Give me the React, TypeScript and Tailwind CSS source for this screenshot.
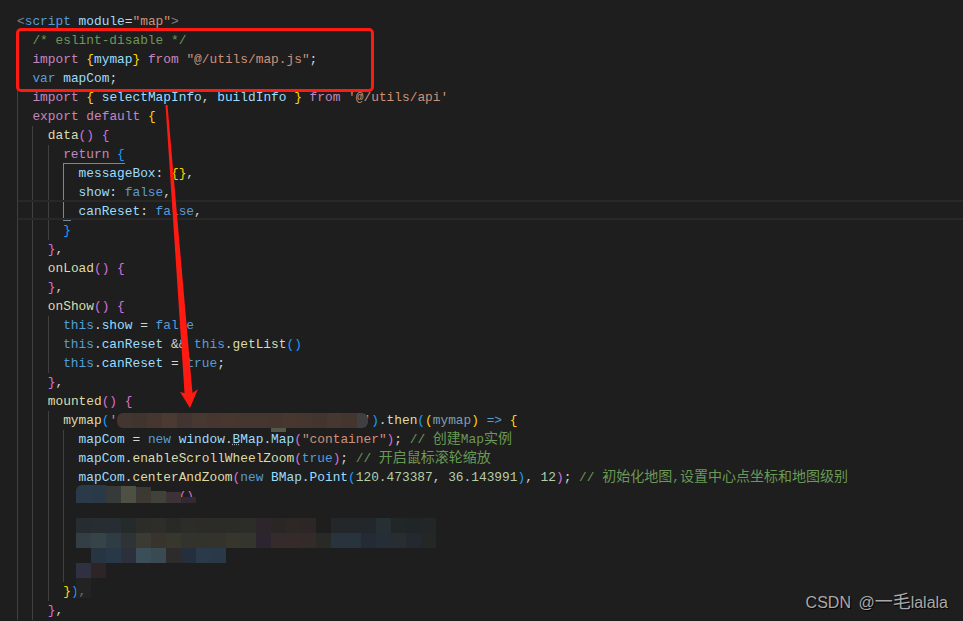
const kw = 'text-[#c586c0]';
const blue = 'text-[#569cd6]';
const vr = 'text-[#9cdcfe]';
const fn = 'text-[#dcdcaa]';
const str = 'text-[#ce9178]';
const com = 'text-[#6a9955]';
const num = 'text-[#b5cea8]';
const gold = 'text-[#ffd700]';
const pink = 'text-[#da70d6]';
const sky = 'text-[#179fff]';
const gray = 'text-[#808080]';
const dim = 'text-[#7f9fb5]';

function Cjk({ children }: { children: string }) {
  return <span className={`font-['Noto_Sans_CJK_SC',sans-serif] text-[14px] leading-[0] ${com}`}>{children}</span>;
}

function T({ c, children }: { c?: string; children: React.ReactNode }) {
  return <span className={c}>{children}</span>;
}

function Line({ indent = 0, guides = indent, active = false, children }: { indent?: number; guides?: number; active?: boolean; children?: React.ReactNode }) {
  return (
    <div className="flex h-[19px] whitespace-pre leading-[19px]">
      {Array.from({ length: indent }).map((_, i) => (
        <span
          key={i}
          className={`h-[19px] w-[15.4px] shrink-0 border-l ${i >= guides ? 'border-transparent' : active && i === indent - 1 ? 'border-[#6f8c9c]' : 'border-[#404040]'}`}
        />
      ))}
      <span>{children}</span>
    </div>
  );
}

const row1 = [
  'h-[18px] bg-[#2b3a48]', 'h-[18px] bg-[#2a3947]', 'h-[17px] bg-[#363a39]', 'h-[17px] bg-[#4f5044]',
  'h-[16px] bg-[#3c3832]', 'h-[12px] bg-[#41433b]', 'h-[11px] bg-[#3e3239]', 'h-[6px] bg-[#322a33]',
];
const row2 = [
  'bg-[#262c30]', 'bg-[#272d30]', 'bg-[#272e33]', 'bg-[#252a2a]', 'bg-[#2c2d28]', 'bg-[#2f2d29]', 'bg-[#292927]', 'bg-[#2c2c28]',
  'bg-[#2c2b27]', 'bg-[#2b2c27]', 'bg-[#2b2c27]', 'bg-[#2c2d28]', 'bg-[#2c2529]', 'bg-[#2b2626]', 'bg-[#2d2726]', 'bg-[#2c2726]',
  'bg-[#1e1e1e]', 'bg-[#232729]', 'bg-[#232729]', 'bg-[#22272b]', 'bg-[#263033]', 'bg-[#212626]', 'bg-[#202627]', 'bg-[#222626]',
];
const row3 = [
  'bg-[#343f45]', 'bg-[#36444a]', 'bg-[#303c44]', 'bg-[#2e3436]', 'bg-[#3c3b33]', 'bg-[#36342d]', 'bg-[#38372e]', 'bg-[#31332c]',
  'bg-[#32332c]', 'bg-[#33332c]', 'bg-[#37362d]', 'bg-[#34352c]', 'bg-[#2c2530]', 'bg-[#362b2b]', 'bg-[#362b2a]', 'bg-[#322b2a]',
  'bg-[#292a27]', 'bg-[#28333d]', 'bg-[#28333d]', 'bg-[#252b35]', 'bg-[#252e36]', 'bg-[#272d30]', 'bg-[#24292f]', 'bg-[#232827]',
];
const row4 = ['bg-[#1e1e1e]', 'bg-[#273442]', 'bg-[#293847]', 'bg-[#2c303a]', 'bg-[#3a4f5a]', 'bg-[#394a50]', 'bg-[#2d2b2b]', 'bg-[#252e3b]', 'bg-[#2a3a4a]', 'bg-[#2a3947]'];
const row5 = ['bg-[#2f3040]', 'bg-[#2d2425]'];
const redact = [
  'bg-[#43352f]', 'bg-[#40342f]', 'bg-[#453630]', 'bg-[#4a3a32]', 'bg-[#423531]', 'bg-[#473832]', 'bg-[#47362f]', 'bg-[#48372f]',
  'bg-[#463630]', 'bg-[#463630]', 'bg-[#45352f]', 'bg-[#48372f]', 'bg-[#463630]', 'bg-[#423530]', 'bg-[#463731]', 'bg-[#44362f]', 'bg-[#3f3f42]',
];

function Mosaic({ cells, h = 'h-[15px]' }: { cells: string[]; h?: string }) {
  return (
    <div className="flex items-end">
      {cells.map((cell, i) => (
        <div key={i} className={`w-[15px] shrink-0 ${h} ${cell}`} />
      ))}
    </div>
  );
}

export default function App() {
  return (
    <div className="relative h-[621px] w-[963px] overflow-hidden bg-[#1e1e1e] pl-[17px] pt-[12px] font-['Liberation_Mono','Noto_Sans_CJK_SC',monospace] text-[12.83px] text-[#d4d4d4]">
      {/* current line highlight */}
      <div className="absolute left-[18px] right-0 top-[200px] h-[20px] border-y-2 border-[#282828]" />

      <Line><T c={gray}>&lt;</T><T c={blue}>script</T> <T c={vr}>module</T>=<T c={str}>"map"</T><T c={gray}>&gt;</T></Line>
      <Line indent={1}><T c={com}>/* eslint-disable */</T></Line>
      <Line indent={1}><T c={kw}>import</T> <T c={gold}>{'{'}</T><T c={vr}>mymap</T><T c={gold}>{'}'}</T> <T c={kw}>from</T> <T c={str}>"@/utils/map.js"</T>;</Line>
      <Line indent={1}><T c={blue}>var</T> <T c={vr}>mapCom</T>;</Line>
      <Line indent={1}><T c={kw}>import</T> <T c={gold}>{'{'}</T> <T c={vr}>selectMapInfo</T>, <T c={vr}>buildInfo</T> <T c={gold}>{'}'}</T> <T c={kw}>from</T> <T c={str}>'@/utils/api'</T></Line>
      <Line indent={1}><T c={kw}>export</T> <T c={kw}>default</T> <T c={gold}>{'{'}</T></Line>
      <Line indent={2}><T c={fn}>data</T><T c={pink}>()</T> <T c={pink}>{'{'}</T></Line>
      <Line indent={3}><T c={kw}>return</T> <T c={sky}>{'{'}</T></Line>
      <Line indent={4} active><T c={vr}>messageBox</T>: <T c={gold}>{'{}'}</T>,</Line>
      <Line indent={4} active><T c={vr}>show</T>: <T c={blue}>false</T>,</Line>
      <Line indent={4} active><T c={vr}>canReset</T>: <T c={blue}>false</T>,</Line>
      <Line indent={3}><T c={sky}>{'}'}</T></Line>
      <Line indent={2}><T c={pink}>{'}'}</T>,</Line>
      <Line indent={2}><T c={fn}>onLoad</T><T c={pink}>()</T> <T c={pink}>{'{'}</T></Line>
      <Line indent={2}><T c={pink}>{'}'}</T>,</Line>
      <Line indent={2}><T c={fn}>onShow</T><T c={pink}>()</T> <T c={pink}>{'{'}</T></Line>
      <Line indent={3}><T c={blue}>this</T>.<T c={vr}>show</T> = <T c={blue}>false</T></Line>
      <Line indent={3}><T c={blue}>this</T>.<T c={vr}>canReset</T> &amp;&amp; <T c={blue}>this</T>.<T c={fn}>getList</T><T c={sky}>()</T></Line>
      <Line indent={3}><T c={blue}>this</T>.<T c={vr}>canReset</T> = <T c={blue}>true</T>;</Line>
      <Line indent={2}><T c={pink}>{'}'}</T>,</Line>
      <Line indent={2}><T c={fn}>mounted</T><T c={pink}>()</T> <T c={pink}>{'{'}</T></Line>
      <Line indent={3}><T c={fn}>mymap</T><T c={sky}>(</T><T c={str}>'{' '.repeat(32)}'</T><T c={sky}>)</T>.<T c={fn}>then</T><T c={sky}>(</T><T c={gold}>(</T><T c={dim}>mymap</T><T c={gold}>)</T> <T c={blue}>=&gt;</T> <T c={gold}>{'{'}</T></Line>
      <Line indent={4}><T c={vr}>mapCom</T> = <T c={blue}>new</T> <T c={vr}>window</T>.<T c="underline decoration-dotted decoration-[#a0a0a0] text-[#9cdcfe]">B</T><T c={vr}>Map</T>.<T c={vr}>Map</T><T c={pink}>(</T><T c={str}>"container"</T><T c={pink}>)</T>; <T c={com}>// </T><Cjk>创建</Cjk><T c={com}>Map</T><Cjk>实例</Cjk></Line>
      <Line indent={4}><T c={vr}>mapCom</T>.<T c={fn}>enableScrollWheelZoom</T><T c={pink}>(</T><T c={blue}>true</T><T c={pink}>)</T>; <T c={com}>// </T><Cjk>开启鼠标滚轮缩放</Cjk></Line>
      <Line indent={4}><T c={vr}>mapCom</T>.<T c={fn}>centerAndZoom</T><T c={pink}>(</T><T c={blue}>new</T> <T c={vr}>BMap</T>.<T c={vr}>Point</T><T c={sky}>(</T><T c={num}>120.473387</T>, <T c={num}>36.143991</T><T c={sky}>)</T>, <T c={num}>12</T><T c={pink}>)</T>; <T c={com}>// </T><Cjk>初始化地图</Cjk><T c={com}>,</T><Cjk>设置中心点坐标和地图级别</Cjk></Line>
      <Line indent={4}>{' '.repeat(13)}<T c={pink}>()</T></Line>
      <Line indent={4} />
      <Line indent={4} />
      <Line indent={4} />
      <Line indent={4} />
      <Line indent={3}><T c={gold}>{'}'}</T><T c={sky}>)</T>,</Line>
      <Line indent={2}><T c={pink}>{'}'}</T>,</Line>

      {/* active bracket guide */}
      <div className="absolute left-[63px] top-[163px] h-px w-[62px] bg-[#6f8c9c]" />
      <div className="absolute left-[63px] top-[220px] h-px w-[8px] bg-[#6f8c9c]" />

      {/* redacted url */}
      <div className="absolute left-[117px] top-[413px] w-[251px] overflow-hidden rounded-[6px]">
        <Mosaic cells={redact} />
      </div>
      <div className="absolute left-[271px] top-[428px] h-[4px] w-[15px] bg-[#55574a]" />

      {/* redacted code */}
      <div className="absolute left-[76px] top-[485px] flex flex-col">
        <div className="overflow-hidden rounded-tl-[6px]">
          <Mosaic cells={row1} h="" />
        </div>
        <div className="h-[15px]" />
        <Mosaic cells={row2} />
        <Mosaic cells={row3} />
        <Mosaic cells={row4} />
        <Mosaic cells={row5} />
        <Mosaic cells={['bg-[#262626]/60']} h="h-[20px]" />
      </div>

      {/* annotation */}
      <div className="absolute left-[16px] top-[28px] h-[64px] w-[358px] rounded-[5px] border-[3px] border-[#ff1a12]" />
      <svg className="absolute left-0 top-0" width="963" height="621" viewBox="0 0 963 621" fill="none">
        <polygon points="165.5,105 167.5,105 192.5,393 198,389 190,408 180,392 184.5,393" fill="#ff1a12" />
      </svg>

      <div className="absolute bottom-[8px] right-[15px] font-['Liberation_Sans','Noto_Sans_CJK_SC',sans-serif] text-[16px] leading-[20px] text-[#a9a9a9] [text-shadow:1px_1px_1px_#000] [word-spacing:3px]">
        CSDN @<span className="text-[18px] leading-[0]">一毛</span>lalala
      </div>
    </div>
  );
}
